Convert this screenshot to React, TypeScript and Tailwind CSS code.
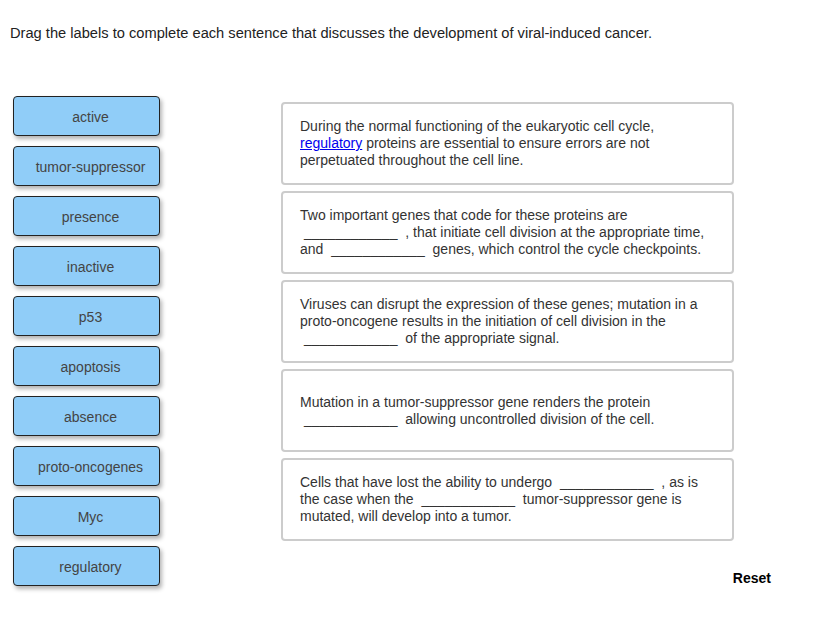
import React from "react";

const labels = [
  "active",
  "tumor-suppressor",
  "presence",
  "inactive",
  "p53",
  "apoptosis",
  "absence",
  "proto-oncogenes",
  "Myc",
  "regulatory",
];

const Blank: React.FC = () => <span className="inline-block mx-[4px]">____________</span>;

const Line: React.FC<{ children: React.ReactNode }> = ({ children }) => (
  <div className="whitespace-nowrap">{children}</div>
);

const sentences: React.ReactNode[][] = [
  [
    <>During the normal functioning of the eukaryotic cell cycle,</>,
    <>
      <a href="#" className="text-[#0000ee] underline">regulatory</a> proteins are essential to ensure errors are not
    </>,
    <>perpetuated throughout the cell line.</>,
  ],
  [
    <>Two important genes that code for these proteins are</>,
    <>
      <Blank /> , that initiate cell division at the appropriate time,
    </>,
    <>
      and <Blank /> genes, which control the cycle checkpoints.
    </>,
  ],
  [
    <>Viruses can disrupt the expression of these genes; mutation in a</>,
    <>proto-oncogene results in the initiation of cell division in the</>,
    <>
      <Blank /> of the appropriate signal.
    </>,
  ],
  [
    <>Mutation in a tumor-suppressor gene renders the protein</>,
    <>
      <Blank /> allowing uncontrolled division of the cell.
    </>,
  ],
  [
    <>
      Cells that have lost the ability to undergo <Blank /> , as is
    </>,
    <>
      the case when the <Blank /> tumor-suppressor gene is
    </>,
    <>mutated, will develop into a tumor.</>,
  ],
];

const App: React.FC = () => {
  return (
    <div className="w-[819px] h-[643px] bg-white text-[14.67px] text-[#333] font-['Liberation_Sans',Arial,sans-serif] overflow-hidden">
      <p className="pt-[25px] pl-[10px] leading-[17px] text-[#222]">
        Drag the labels to complete each sentence that discusses the development of viral-induced cancer.
      </p>

      <div className="flex mt-[54px]">
        {/* Labels */}
        <div className="ml-[13px] w-[147px] flex flex-col gap-[10px]">
          {labels.map((label) => (
            <div
              key={label}
              className="h-[40px] flex items-center justify-center pl-[8px] pt-[2px] bg-[#90cdf8] border border-[#222] rounded-[4px] shadow-[2px_3px_4px_rgba(0,0,0,0.3)] text-[14px] text-[#444]"
            >
              {label}
            </div>
          ))}
        </div>

        {/* Sentences */}
        <div className="ml-[121px] mt-[6px] w-[491px] flex flex-col">
          <div className="w-[453px] flex flex-col gap-[6px]">
            {sentences.map((lines, i) => (
              <div
                key={i}
                className="h-[83px] border-2 border-[#ccc] rounded-[4px] flex flex-col justify-center pl-[17px] text-[14px] leading-[17px]"
              >
                {lines.map((l, j) => (
                  <Line key={j}>{l}</Line>
                ))}
              </div>
            ))}
          </div>
          <div className="self-end mt-[29px] mr-[1px] font-bold text-[14px] text-black leading-[17px]">Reset</div>
        </div>
      </div>
    </div>
  );
};

export default App;
